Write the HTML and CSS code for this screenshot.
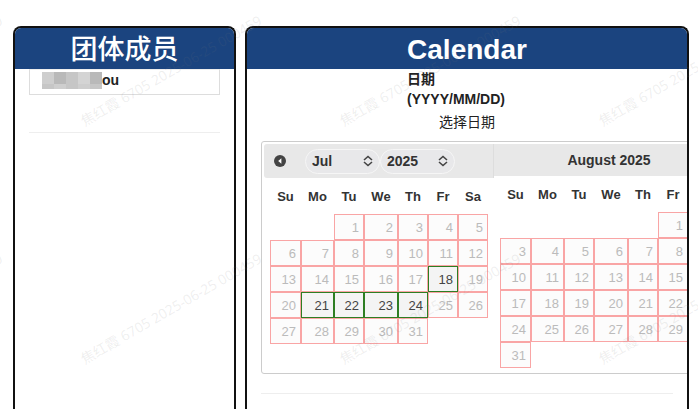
FILE: index.html
```html
<!doctype html>
<html lang="zh-CN">
<head>
	<title>Calendar</title>
	<meta charset="utf-8"/>
	<link rel="stylesheet" href="styles.css">
</head>

<body>
	<div class="panels">
		<section class="panel members">
			<h1>团体成员</h1>
			<div class="content">
				<div class="member">
					<div class="mosaic">
						<i class="c2"></i><i class="c4"></i><i class="c3"></i><i class="c1"></i><i class="c4"></i>
						<i class="c3"></i><i class="c2"></i><i class="c3"></i><i class="c2"></i><i class="c3"></i>
					</div>
					<b>ou</b>
				</div>
				<hr>
			</div>
		</section>

		<section class="panel booking">
			<h1>Calendar</h1>
			<div class="content">
				<div class="date-label">日期<br>(YYYY/MM/DD)</div>
				<div class="pick">选择日期</div>

				<div class="datepicker">
					<div class="month">
						<div class="month-head">
							<button class="prev" type="button" aria-label="Prev">
								<svg width="12" height="12" viewBox="0 0 12 12"><circle cx="6" cy="6" r="6" fill="#444"/><path d="M7.4 3.2v5.6L4.2 6z" fill="#fff"/></svg>
							</button>
							<div class="drop">
								<select aria-label="Month"><option>Jul</option><option>Aug</option></select>
								<svg width="10" height="12" viewBox="0 0 10 12"><path d="M1 5l4-3.5L9 5M1 7l4 3.5L9 7" fill="none" stroke="#444" stroke-width="1.6"/></svg>
							</div>
							<div class="drop">
								<select aria-label="Year"><option>2025</option><option>2026</option></select>
								<svg width="10" height="12" viewBox="0 0 10 12"><path d="M1 5l4-3.5L9 5M1 7l4 3.5L9 7" fill="none" stroke="#444" stroke-width="1.6"/></svg>
							</div>
						</div>
						<table>
							<colgroup><col class="w31"><col class="w33"><col class="w30"><col class="w34"><col class="w30"><col class="w30"><col class="w30"></colgroup>
							<tr><th>Su</th><th>Mo</th><th>Tu</th><th>We</th><th>Th</th><th>Fr</th><th>Sa</th></tr>
							<tr><td class="none" colspan="2"></td><td>1</td><td>2</td><td>3</td><td>4</td><td>5</td></tr>
							<tr><td>6</td><td>7</td><td>8</td><td>9</td><td>10</td><td>11</td><td>12</td></tr>
							<tr><td>13</td><td>14</td><td>15</td><td>16</td><td>17</td><td class="open"><a href="#">18</a></td><td>19</td></tr>
							<tr><td>20</td><td class="open"><a href="#">21</a></td><td class="open"><a href="#">22</a></td><td class="open"><a href="#">23</a></td><td class="open"><a href="#">24</a></td><td>25</td><td>26</td></tr>
							<tr><td>27</td><td>28</td><td>29</td><td>30</td><td>31</td><td class="none" colspan="2"></td></tr>
						</table>
					</div>

					<div class="month">
						<div class="month-head last">August 2025</div>
						<table class="short">
							<colgroup><col class="w31"><col class="w33"><col class="w30"><col class="w34"><col class="w30"><col class="w30"></colgroup>
							<tr><th>Su</th><th>Mo</th><th>Tu</th><th>We</th><th>Th</th><th>Fr</th></tr>
							<tr><td class="none" colspan="5"></td><td>1</td></tr>
							<tr><td>3</td><td>4</td><td>5</td><td>6</td><td>7</td><td>8</td></tr>
							<tr><td>10</td><td>11</td><td>12</td><td>13</td><td>14</td><td>15</td></tr>
							<tr><td>17</td><td>18</td><td>19</td><td>20</td><td>21</td><td>22</td></tr>
							<tr><td>24</td><td>25</td><td>26</td><td>27</td><td>28</td><td>29</td></tr>
							<tr><td>31</td><td class="none" colspan="5"></td></tr>
						</table>
					</div>
				</div>
				<hr>
			</div>
		</section>
	</div>

	<!-- user stamp repeated over the whole page -->
	<div class="watermark" aria-hidden="true">
		<div class="marks">
			<span>焦红霞 6705 2025-06-25 000459</span>
			<span>焦红霞 6705 2025-06-25 000459</span>
			<span>焦红霞 6705 2025-06-25 000459</span>
			<span>焦红霞 6705 2025-06-25 000459</span>
			<span>焦红霞 6705 2025-06-25 000459</span>
			<span>焦红霞 6705 2025-06-25 000459</span>
			<span>焦红霞 6705 2025-06-25 000459</span>
			<span>焦红霞 6705 2025-06-25 000459</span>
		</div>
	</div>
</body>
</html>
```
FILE: styles.css
```css
* {
	box-sizing: border-box;
}
body {
	margin: 0;
	position: relative;
	overflow: hidden;
	background: #fff;
	color: #222;
	font-family: "Liberation Sans", Arial, "Noto Sans CJK SC", sans-serif;
	font-size: 14px;
}
.panels {
	display: grid;
	grid-template-columns: minmax(0, 223fr) minmax(0, 444fr);
	gap: 9px;
	min-height: 100vh;
	padding: 26px 9px 0 13px;
}
.panel {
	border: 2px solid #111;
	border-bottom: 0;
	border-radius: 8px 8px 0 0;
	overflow: hidden;
}
h1 {
	margin: 0;
	height: 41px;
	line-height: 44px;
	background: #1b447f;
	color: #fff;
	font-size: 28px;
	text-align: center;
}
.members h1 {
	font-size: 27px;
	font-weight: 500;
}
.content {
	padding: 0 14px;
}
hr {
	border: 0;
	border-top: 1px solid #eee;
	margin: 0;
}

/* members */
.member {
	display: flex;
	align-items: center;
	height: 26px;
	padding: 0 12px 4px;
	border: 1px solid #ddd;
	border-top-color: #eee;
	margin-bottom: 37px;
}
.mosaic {
	display: grid;
	grid-template-columns: repeat(5, 12px);
	grid-template-rows: 12px 5px;
}
.c1 { background: #d4d4d4; }
.c2 { background: #cecece; }
.c3 { background: #c6c6c6; }
.c4 { background: #b9b9b9; }

/* date field */
.date-label {
	width: 120px;
	margin: 0 auto;
	font-weight: bold;
	line-height: 20px;
}
.pick {
	text-align: center;
	line-height: 20px;
	padding: 3px 0 9px;
}

.datepicker {
	display: flex;
	width: 466px;
	padding: 2px 2px 5px;
	border: 1px solid #ccc;
	border-radius: 3px;
	margin-bottom: 19px;
}
.month {
	flex: 1;
}
.month-head {
	display: flex;
	align-items: center;
	height: 34px;
	padding-left: 10px;
	background: #e8e8e8;
	border-right: 1px solid #ddd;
	border-radius: 3px 0 0 3px;
	color: #333;
	font-weight: bold;
}
.month-head.last {
	height: 32px;
	padding: 0;
	border: 0;
	border-radius: 0 3px 3px 0;
	justify-content: center;
}
.prev {
	display: flex;
	padding: 0;
	margin-right: 19px;
	border: 0;
	background: none;
}
.drop {
	display: flex;
	align-items: center;
	position: relative;
}
.drop svg {
	position: absolute;
	right: 7px;
	pointer-events: none;
}
select {
	appearance: none;
	width: 75px;
	height: 25px;
	padding: 0 6px;
	border: 1px solid #f6f6f6;
	border-radius: 13px;
	background: #e8e8ea;
	color: #333;
	font: inherit;
}
table {
	table-layout: fixed;
	width: 218px;
	margin: 0 6px;
	border-collapse: separate;
	border-spacing: 0;
	font-size: 13px;
}
table.short {
	width: 188px;
}
.w30 { width: 30px; }
.w31 { width: 31px; }
.w33 { width: 33px; }
.w34 { width: 34px; }
th {
	height: 36px;
	padding: 0;
	color: #333;
}
td {
	height: 26px;
	padding: 0 4px;
	border: 1px solid #f9a5a5;
	background: #fcfcfc;
	color: #bbb;
	text-align: right;
}
td.none {
	border: 0;
	background: none;
}
td.open {
	border-color: #2e7d22;
	background: #f4f4f4;
}
td a {
	color: #444;
	text-decoration: none;
}

/* watermark */
.watermark {
	position: absolute;
	inset: 0;
	overflow: hidden;
	pointer-events: none;
}
.marks {
	display: grid;
	grid-template-columns: repeat(4, 259px);
	grid-auto-rows: 238px;
	margin: 111px 0 0 -172px;
	color: rgba(120, 120, 120, 0.12);
	font-family: "Noto Sans", "Noto Sans CJK SC", sans-serif;
	line-height: 20px;
}
.marks span {
	height: 20px;
	white-space: nowrap;
	transform: rotate(-30deg);
	transform-origin: left bottom;
}
```
